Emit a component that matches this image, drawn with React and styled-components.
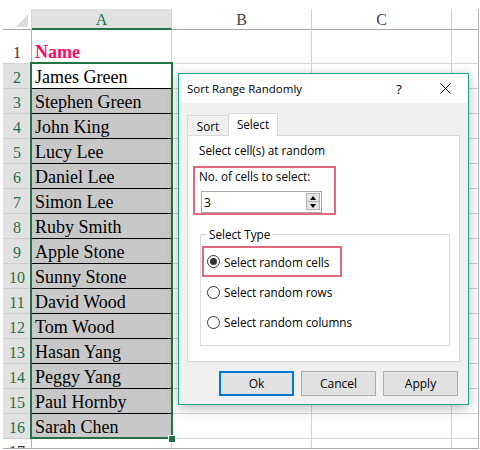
import React from 'react';
import styled, { createGlobalStyle } from 'styled-components';

const Global = createGlobalStyle`
  html, body { margin: 0; padding: 0; background: #fff; }
  body { width: 480px; height: 450px; overflow: hidden; }
`;

const Page = styled.div`
  width: 480px;
  height: 450px;
  box-sizing: border-box;
  padding: 9px 0 0 3px;
  background: #fff;
`;

const Sheet = styled.div`
  position: relative;
  width: 476px;
  height: 440px;
  box-sizing: border-box;
  border-right: 1px solid #b4b4b4;
  border-bottom: 1px solid #a8a8a8;
  display: grid;
  grid-template-columns: 29px 140px 140px 140px 26px;
  grid-template-rows: 21px 34px repeat(15, 25px) 1fr;
  overflow: hidden;
  font-family: "Liberation Serif", "Times New Roman", serif;
`;

const Corner = styled.div`
  box-sizing: border-box;
  background: #fff;
  border-bottom: 1px solid #a6a6a6;
  border-right: 1px solid #d4d4d4;
  display: flex;
  align-items: flex-end;
  justify-content: flex-end;
  padding: 0 3px 2px 0;
`;

const ColHead = styled.div`
  box-sizing: border-box;
  background: ${p => (p.$active ? '#e1e1e1' : '#fff')};
  border-right: ${p => (p.$last ? 'none' : '1px solid #d0d0d0')};
  border-bottom: ${p => (p.$active ? '2px solid #217346' : '1px solid #a6a6a6')};
  color: ${p => (p.$active ? '#217346' : '#444')};
  font-size: 16px;
  display: flex;
  align-items: center;
  justify-content: center;
  padding-top: 2px;
`;

const RowHead = styled.div`
  box-sizing: border-box;
  background: ${p => (p.$sel ? '#e1e1e1' : '#fff')};
  border-right: 1px solid #b4b4b4;
  border-bottom: ${p => (p.$tail ? 'none' : p.$sel ? '1px solid #cdcdcd' : '1px solid #d4d4d4')};
  color: ${p => (p.$sel ? '#217346' : '#333')};
  font-size: 16px;
  line-height: ${p => (p.$tail ? '25px' : '21px')};
  display: flex;
  align-items: ${p => (p.$tail ? 'flex-start' : 'flex-end')};
  justify-content: center;
  overflow: hidden;
`;

const Cell = styled.div`
  box-sizing: border-box;
  background: #fff;
  border-right: ${p => (p.$last ? 'none' : '1px solid #d4d4d4')};
  border-bottom: ${p => (p.$tail ? 'none' : '1px solid #d4d4d4')};
  font-size: 18px;
  line-height: 21px;
  padding-left: 3px;
  display: flex;
  align-items: flex-end;
  white-space: nowrap;
  overflow: hidden;
`;

const HeaderText = styled.span`
  color: #ff0a6a;
  font-weight: bold;
`;

const NameCell = styled.div`
  box-sizing: border-box;
  background: ${p => (p.$fill ? '#c8c8c8' : '#fff')};
  border-right: 1px solid #000;
  border-bottom: 1px solid #000;
  font-size: 18px;
  line-height: 21px;
  color: #000;
  padding-left: 3px;
  display: flex;
  align-items: flex-end;
  white-space: nowrap;
  overflow: hidden;
`;

const Selection = styled.div`
  position: absolute;
  left: 27px;
  top: 53px;
  width: 143px;
  height: 377px;
  box-sizing: border-box;
  border: 2px solid #217346;
  pointer-events: none;
`;

const FillHandle = styled.div`
  position: absolute;
  right: -5px;
  bottom: -6px;
  width: 6px;
  height: 6px;
  background: #217346;
  border: 1px solid #fff;
`;

const Dialog = styled.div`
  position: absolute;
  left: 175px;
  top: 64px;
  width: 291px;
  height: 332px;
  box-sizing: border-box;
  border: 1px solid #1aa68b;
  background: #f0f0f0;
  box-shadow: 0 3px 12px rgba(0, 0, 0, 0.28);
  display: flex;
  flex-direction: column;
  font-family: "Open Sans", "Noto Sans", sans-serif;
  font-size: 11.7px;
  color: #000;
`;

const TitleBar = styled.div`
  height: 29px;
  flex: none;
  background: #fff;
  display: flex;
  align-items: center;
  padding-left: 8px;
`;

const TitleText = styled.span`
  font-size: 11.5px;
`;

const TitleButton = styled.div`
  width: 46px;
  height: 29px;
  display: flex;
  align-items: center;
  justify-content: center;
  font-size: 13.5px;
  margin-left: ${p => (p.$first ? 'auto' : '0')};
`;

const Body = styled.div`
  flex: 1;
  padding: 10px 8px 8px 8px;
  display: flex;
  flex-direction: column;
`;

const TabStrip = styled.div`
  height: 22px;
  display: flex;
  align-items: flex-end;
`;

const Tab = styled.div`
  position: relative;
  z-index: 1;
  box-sizing: border-box;
  width: ${p => (p.$active ? '50px' : '41px')};
  height: ${p => (p.$active ? '23px' : '20px')};
  margin-bottom: ${p => (p.$active ? '-1px' : '0')};
  background: ${p => (p.$active ? '#fff' : '#f0f0f0')};
  border: 1px solid #d9d9d9;
  border-bottom: none;
  border-right: ${p => (p.$active ? '1px solid #d9d9d9' : 'none')};
  display: flex;
  align-items: center;
  justify-content: center;
  padding-bottom: ${p => (p.$active ? '2px' : '0')};
`;

const Panel = styled.div`
  height: 227px;
  box-sizing: border-box;
  background: #fff;
  border: 1px solid #d9d9d9;
  padding-top: 6px;
  display: flex;
  flex-direction: column;
  align-items: flex-start;
`;

const Caption = styled.div`
  line-height: 16px;
  margin-left: 11px;
`;

const Highlight = styled.div`
  box-sizing: border-box;
  width: 143px;
  height: 49px;
  margin: 8px 0 0 5px;
  border: 2px solid #e4687b;
  padding-left: 4px;
  display: flex;
  flex-direction: column;
  align-items: flex-start;
`;

const FieldLabel = styled.div`
  line-height: 16px;
`;

const NumberBox = styled.div`
  box-sizing: border-box;
  width: 121px;
  height: 22px;
  margin: 7px 0 0 2px;
  border: 1px solid #a9a9a9;
  background: #fff;
  display: flex;
  align-items: center;
  padding-left: 2px;
`;

const NumberValue = styled.span`
  flex: 1;
  font-size: 12px;
`;

const Spinner = styled.div`
  width: 14px;
  height: 17px;
  margin: 0 1px 1px 0;
  display: flex;
  flex-direction: column;
`;

const SpinButton = styled.div`
  flex: 1;
  box-sizing: border-box;
  background: #e5e5e5;
  border: 1px solid #b2b2b2;
  border-top: ${p => (p.$down ? 'none' : '1px solid #b2b2b2')};
  display: flex;
  align-items: center;
  justify-content: center;
`;

const Group = styled.fieldset`
  box-sizing: border-box;
  width: 250px;
  margin: 11px 0 0 12px;
  padding: 4px 0 8px 1px;
  border: 1px solid #dcdcdc;
  min-width: 0;
`;

const Legend = styled.legend`
  line-height: 16px;
  padding: 0 2px;
  margin-left: 5px;
`;

const Option = styled.div`
  box-sizing: border-box;
  width: 140px;
  height: ${p => (p.$highlight ? '31px' : '30px')};
  border: 2px solid ${p => (p.$highlight ? '#e4687b' : 'transparent')};
  display: flex;
  align-items: center;
  gap: 4px;
  padding-left: 3px;
  white-space: nowrap;
`;

const Radio = styled.span`
  box-sizing: border-box;
  width: 13px;
  height: 13px;
  flex: none;
  border-radius: 50%;
  border: 1px solid #333;
  background: #fff;
  display: flex;
  align-items: center;
  justify-content: center;
  &::after {
    content: '';
    width: 7px;
    height: 7px;
    border-radius: 50%;
    background: ${p => (p.$checked ? '#333' : 'transparent')};
  }
`;

const ButtonRow = styled.div`
  margin-top: 9px;
  display: flex;
  justify-content: flex-end;
  gap: 7px;
  padding-right: 2px;
`;

const Button = styled.div`
  box-sizing: border-box;
  width: 75px;
  height: 25px;
  background: #e1e1e1;
  border: ${p => (p.$primary ? '2px solid #0078d7' : '1px solid #adadad')};
  display: flex;
  align-items: center;
  justify-content: center;
  font-size: 12px;
`;

const names = [
  'James Green',
  'Stephen Green',
  'John King',
  'Lucy Lee',
  'Daniel Lee',
  'Simon Lee',
  'Ruby Smith',
  'Apple Stone',
  'Sunny Stone',
  'David Wood',
  'Tom Wood',
  'Hasan Yang',
  'Peggy Yang',
  'Paul Hornby',
  'Sarah Chen',
];

export default function App() {
  return (
    <>
      <Global />
      <Page>
        <Sheet>
          <Corner>
            <svg width="12" height="13" viewBox="0 0 12 13">
              <polygon points="12,0 12,13 0,13" fill="#dcdcdc" />
            </svg>
          </Corner>
          <ColHead $active>A</ColHead>
          <ColHead>B</ColHead>
          <ColHead>C</ColHead>
          <ColHead $last />

          <RowHead>1</RowHead>
          <Cell>
            <HeaderText>Name</HeaderText>
          </Cell>
          <Cell />
          <Cell />
          <Cell $last />

          {names.map((n, i) => (
            <React.Fragment key={n}>
              <RowHead $sel>{i + 2}</RowHead>
              <NameCell $fill={i > 0}>{n}</NameCell>
              <Cell />
              <Cell />
              <Cell $last />
            </React.Fragment>
          ))}

          <RowHead $tail>17</RowHead>
          <Cell $tail />
          <Cell $tail />
          <Cell $tail />
          <Cell $tail $last />

          <Selection>
            <FillHandle />
          </Selection>

          <Dialog>
            <TitleBar>
              <TitleText>Sort Range Randomly</TitleText>
              <TitleButton $first>?</TitleButton>
              <TitleButton>
                <svg width="11" height="11" viewBox="0 0 11 11">
                  <path d="M0.5 0.5 L10.5 10.5 M10.5 0.5 L0.5 10.5" stroke="#000" strokeWidth="1" fill="none" />
                </svg>
              </TitleButton>
            </TitleBar>
            <Body>
              <TabStrip>
                <Tab>Sort</Tab>
                <Tab $active>Select</Tab>
              </TabStrip>
              <Panel>
                <Caption>Select cell(s) at random</Caption>
                <Highlight>
                  <FieldLabel>No. of cells to select:</FieldLabel>
                  <NumberBox>
                    <NumberValue>3</NumberValue>
                    <Spinner>
                      <SpinButton>
                        <svg width="6" height="4" viewBox="0 0 6 4">
                          <polygon points="3,0 6,4 0,4" fill="#000" />
                        </svg>
                      </SpinButton>
                      <SpinButton $down>
                        <svg width="6" height="4" viewBox="0 0 6 4">
                          <polygon points="0,0 6,0 3,4" fill="#000" />
                        </svg>
                      </SpinButton>
                    </Spinner>
                  </NumberBox>
                </Highlight>
                <Group>
                  <Legend>Select Type</Legend>
                  <Option $highlight>
                    <Radio $checked />
                    Select random cells
                  </Option>
                  <Option>
                    <Radio />
                    Select random rows
                  </Option>
                  <Option>
                    <Radio />
                    Select random columns
                  </Option>
                </Group>
              </Panel>
              <ButtonRow>
                <Button $primary>Ok</Button>
                <Button>Cancel</Button>
                <Button>Apply</Button>
              </ButtonRow>
            </Body>
          </Dialog>
        </Sheet>
      </Page>
    </>
  );
}
